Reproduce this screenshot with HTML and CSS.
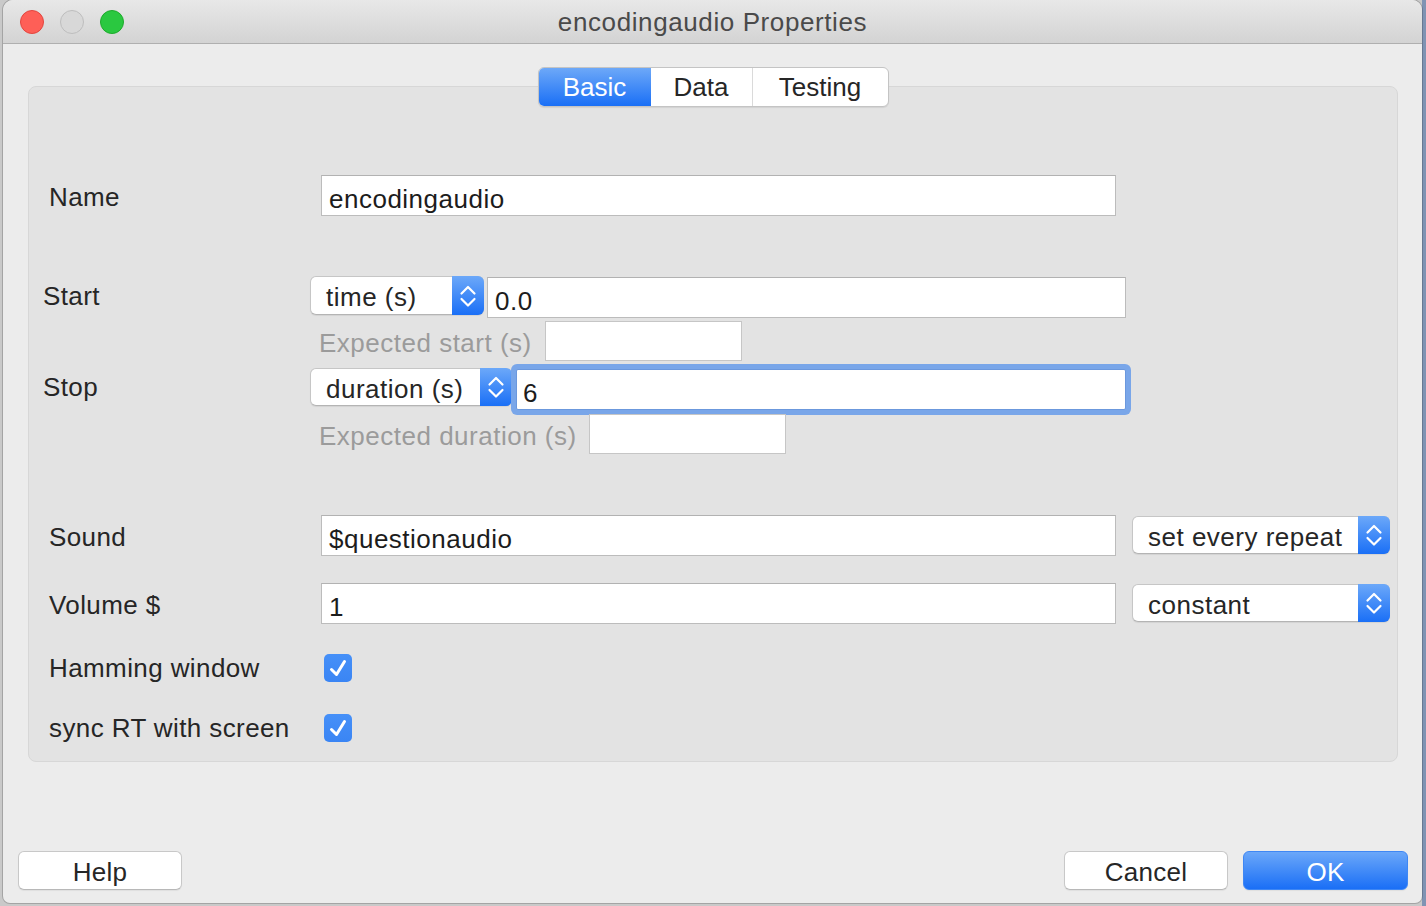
FILE: index.html
```html
<!DOCTYPE html>
<html>
<head>
<meta charset="utf-8">
<title>encodingaudio Properties</title>
<link rel="stylesheet" href="styles.css">
</head>
<body>
<div class="window">
  <div class="titlebar">
    <div class="lights">
      <span class="light red"></span>
      <span class="light gray"></span>
      <span class="light green"></span>
    </div>
    <div class="title">encodingaudio Properties</div>
  </div>

  <div class="content">
    <div class="tabs">
      <div class="tab tab-basic active">Basic</div>
      <div class="tab tab-data">Data</div>
      <div class="tab tab-testing">Testing</div>
    </div>

    <div class="panel">
      <div class="row row-name">
        <div class="label label-wide">Name</div>
        <div class="field field-long">encodingaudio</div>
      </div>

      <div class="row row-start">
        <div class="label label-narrow">Start</div>
        <div class="select select-time">
          <span class="select-text">time (s)</span>
          <span class="stepper"><svg viewBox="0 0 32 38" width="32" height="38"><path d="M9.5 16.5 L16 10 L22.5 16.5 M9.5 22 L16 28.5 L22.5 22" fill="none" stroke="#fff" stroke-width="2.2" stroke-linecap="round" stroke-linejoin="round"/></svg></span>
        </div>
        <div class="field field-start">0.0</div>
      </div>

      <div class="row row-expected">
        <div class="hint hint-start">Expected start (s)</div>
        <div class="field field-small"></div>
      </div>

      <div class="row row-stop">
        <div class="label label-narrow">Stop</div>
        <div class="select select-duration">
          <span class="select-text">duration (s)</span>
          <span class="stepper"><svg viewBox="0 0 32 38" width="32" height="38"><path d="M9.5 16.5 L16 10 L22.5 16.5 M9.5 22 L16 28.5 L22.5 22" fill="none" stroke="#fff" stroke-width="2.2" stroke-linecap="round" stroke-linejoin="round"/></svg></span>
        </div>
        <div class="field field-stop focused">6</div>
      </div>

      <div class="row row-expected row-expected-dur">
        <div class="hint hint-duration">Expected duration (s)</div>
        <div class="field field-small"></div>
      </div>

      <div class="row row-sound">
        <div class="label label-wide">Sound</div>
        <div class="field field-long">$questionaudio</div>
        <div class="select select-right">
          <span class="select-text">set every repeat</span>
          <span class="stepper"><svg viewBox="0 0 32 38" width="32" height="38"><path d="M9.5 16.5 L16 10 L22.5 16.5 M9.5 22 L16 28.5 L22.5 22" fill="none" stroke="#fff" stroke-width="2.2" stroke-linecap="round" stroke-linejoin="round"/></svg></span>
        </div>
      </div>

      <div class="row row-volume">
        <div class="label label-wide">Volume $</div>
        <div class="field field-long">1</div>
        <div class="select select-right">
          <span class="select-text">constant</span>
          <span class="stepper"><svg viewBox="0 0 32 38" width="32" height="38"><path d="M9.5 16.5 L16 10 L22.5 16.5 M9.5 22 L16 28.5 L22.5 22" fill="none" stroke="#fff" stroke-width="2.2" stroke-linecap="round" stroke-linejoin="round"/></svg></span>
        </div>
      </div>

      <div class="row row-check row-hamming">
        <div class="label label-check">Hamming window</div>
        <span class="checkbox"><svg viewBox="0 0 28 28" width="28" height="28"><path d="M7.5 15.5 L12.5 20.5 L20.5 7.5" fill="none" stroke="#fff" stroke-width="3" stroke-linecap="round" stroke-linejoin="round"/></svg></span>
      </div>

      <div class="row row-check row-sync">
        <div class="label label-check">sync RT with screen</div>
        <span class="checkbox"><svg viewBox="0 0 28 28" width="28" height="28"><path d="M7.5 15.5 L12.5 20.5 L20.5 7.5" fill="none" stroke="#fff" stroke-width="3" stroke-linecap="round" stroke-linejoin="round"/></svg></span>
      </div>
    </div>
  </div>

  <div class="footer">
    <div class="button">Help</div>
    <div class="footer-right">
      <div class="button">Cancel</div>
      <div class="button primary">OK</div>
    </div>
  </div>
</div>
</body>
</html>
```

FILE: styles.css
```css
* {
  box-sizing: border-box;
}

html, body {
  margin: 0;
  padding: 0;
}

body {
  width: 1426px;
  height: 906px;
  overflow: hidden;
  background: linear-gradient(90deg, #c9c9c9 0, #c9c9c9 1422px, #7f93b3 1422px);
  padding: 0 4px 3px 3px;
  font-family: "Liberation Sans", Arial, Helvetica, sans-serif;
  color: #262626;
}

.window {
  width: 1419px;
  height: 903px;
  background: #ececec;
  border-radius: 10px 10px 7px 7px;
  box-shadow: 0 0 0 1px rgba(0, 0, 0, 0.18);
  display: flex;
  flex-direction: column;
  overflow: hidden;
}

/* Title bar */
.titlebar {
  height: 44px;
  flex: none;
  background: linear-gradient(#e8e8e8, #d3d3d3);
  border-bottom: 1px solid #afafaf;
  display: grid;
  align-items: center;
}

.lights,
.title {
  grid-area: 1 / 1;
}

.lights {
  display: flex;
  gap: 16px;
  padding-left: 17px;
  justify-self: start;
}

.light {
  width: 24px;
  height: 24px;
  border-radius: 50%;
  display: block;
}

.light.red {
  background: #fe5f57;
  border: 1px solid #e2463f;
}

.light.gray {
  background: #d8d8d8;
  border: 1px solid #bdbdbd;
}

.light.green {
  background: #2ac840;
  border: 1px solid #1eaa2c;
}

.title {
  justify-self: center;
  font-size: 26px;
  letter-spacing: 0.6px;
  color: #4a4a4a;
  line-height: 32px;
  padding-left: 0;
}

/* Content */
.content {
  padding: 23px 24px 0 25px;
  display: flex;
  flex-direction: column;
}

.tabs {
  align-self: center;
  display: flex;
  height: 40px;
  margin-bottom: -21px;
  position: relative;
  z-index: 1;
  background: #fff;
  border: 1px solid #c4c4c4;
  border-radius: 6px;
  box-shadow: 0 1px 1px rgba(0, 0, 0, 0.08);
  overflow: hidden;
}

.tab {
  font-size: 26px;
  line-height: 38px;
  text-align: center;
  color: #262626;
}

.tab-basic {
  width: 112px;
}

.tab-data {
  width: 102px;
  border-right: 1px solid #dadada;
}

.tab-testing {
  width: 135px;
}

.tab.active {
  background: linear-gradient(#6da8f8, #1a6ff6);
  color: #fff;
}

.panel {
  height: 676px;
  background: #e3e3e3;
  border: 1px solid #d7d7d7;
  border-radius: 8px;
  padding-top: 88px;
  display: flex;
  flex-direction: column;
}

.row {
  display: flex;
  align-items: flex-start;
  flex: none;
}

.label {
  font-size: 26px;
  letter-spacing: 0.4px;
  color: #262626;
  flex: none;
}

.label-wide {
  width: 272px;
  margin-left: 20px;
  line-height: 44px;
}

.label-narrow {
  width: 267px;
  margin-left: 14px;
  line-height: 40px;
}

.label-check {
  width: 275px;
  margin-left: 20px;
  line-height: 32px;
}

.field {
  background: #fff;
  border: 1px solid #bcbcbc;
  border-top-color: #b2b2b2;
  height: 41px;
  font-size: 26px;
  letter-spacing: 0.5px;
  color: #1c1c1c;
  line-height: 46px;
  padding-left: 7px;
  flex: none;
  white-space: nowrap;
}

.field-long {
  width: 795px;
}

.row-name {
  height: 42px;
}

.row-start {
  height: 42px;
  margin-top: 59px;
}

.field-start {
  width: 639px;
  margin-left: 3px;
  margin-top: 1px;
}

.row-expected {
  height: 40px;
  margin-top: 3px;
  padding-left: 290px;
}

.row-expected-dur {
  margin-top: 0;
}

.hint {
  font-size: 26px;
  letter-spacing: 0.5px;
  color: #9b9b9b;
  line-height: 44px;
  flex: none;
}

.hint-start {
  width: 226px;
}

.hint-duration {
  width: 270px;
}

.field-small {
  width: 197px;
  height: 40px;
  border-color: #c6c6c6;
}

.row-stop {
  height: 50px;
  margin-top: 3px;
}

.row-stop .label {
  line-height: 46px;
}

.select-duration {
  margin-top: 4px;
}

.field-stop {
  width: 610px;
  margin-left: 4px;
  margin-top: 5px;
  border-color: #6b98dd;
  border-radius: 2px;
  box-shadow: 0 0 0 5px #79a6e9;
  padding-left: 6px;
}

.row-sound {
  height: 42px;
  margin-top: 61px;
}

.row-volume {
  height: 42px;
  margin-top: 26px;
}

.select-right {
  width: 258px;
  margin-left: 16px;
  margin-top: 1px;
}

.row-check {
  height: 28px;
  align-items: center;
}

.row-hamming {
  margin-top: 29px;
}

.row-sync {
  margin-top: 32px;
}

/* Select (popup button) */
.select {
  display: flex;
  height: 38px;
  background: #fff;
  border: 1px solid #c6c6c6;
  border-bottom-color: #b4b4b4;
  border-radius: 6px;
  box-shadow: 0 1px 1px rgba(0, 0, 0, 0.07);
  flex: none;
}

.select-time {
  width: 174px;
  height: 39px;
}

.select-duration {
  width: 202px;
}

.select-text {
  flex: 1;
  font-size: 26px;
  letter-spacing: 0.5px;
  color: #262626;
  line-height: 40px;
  padding-left: 15px;
  white-space: nowrap;
}

.stepper {
  width: 32px;
  flex: none;
  margin: -1px -1px -1px 0;
  background: linear-gradient(#6ca8f9, #1a6ff6);
  border-radius: 0 6px 6px 0;
  display: flex;
  align-items: center;
  justify-content: center;
}

.stepper svg {
  display: block;
}

.checkbox {
  width: 28px;
  height: 28px;
  border-radius: 5px;
  background: linear-gradient(#4690f8, #3a85f4);
  display: block;
  flex: none;
}

.checkbox svg {
  display: block;
}

/* Footer */
.footer {
  margin-top: auto;
  padding: 0 14px 13px 15px;
  display: flex;
  justify-content: space-between;
}

.footer-right {
  display: flex;
  gap: 15px;
}

.button {
  width: 164px;
  height: 39px;
  background: #fff;
  border: 1px solid #c8c8c8;
  border-bottom-color: #b8b8b8;
  border-radius: 6px;
  box-shadow: 0 1px 1px rgba(0, 0, 0, 0.06);
  font-size: 26px;
  letter-spacing: 0.3px;
  color: #262626;
  line-height: 41px;
  text-align: center;
}

.button.primary {
  width: 165px;
  background: linear-gradient(#6ba7f9, #1a6ff6);
  border-color: #3f87f4;
  color: #fff;
}
```
